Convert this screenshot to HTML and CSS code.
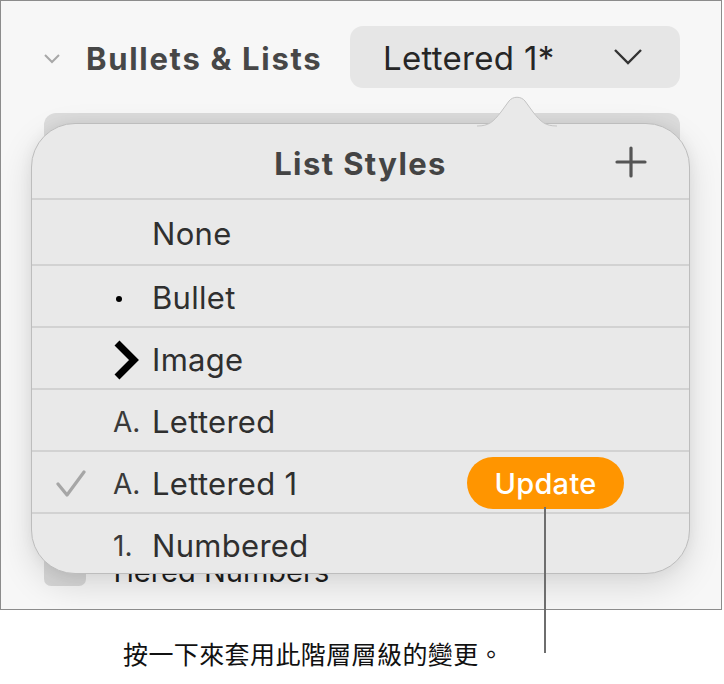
FILE: index.html
```html
<!DOCTYPE html>
<html>
<head>
<meta charset="utf-8">
<link rel="stylesheet" href="styles.css">
</head>
<body>
<div class="page">
  <div class="frame">
    <div class="header">
      <svg class="disclosure" width="16" height="10" viewBox="0 0 16 10"><polyline points="1,1 8,8 15,1" fill="none" stroke="#a8a8a8" stroke-width="2"/></svg>
      <span class="section-title">Bullets &amp; Lists</span>
      <div class="popup">
        <span class="popup-label">Lettered 1*</span>
        <svg width="30" height="18" viewBox="0 0 30 18"><polyline points="2,2 15,15 28,2" fill="none" stroke="#333" stroke-width="2.4"/></svg>
      </div>
    </div>
    <div class="underlay">
      <div class="under-bar"></div>
      <div class="under-row">
        <span class="checkbox"></span>
        <span class="under-label">Tiered Numbers</span>
      </div>
    </div>

    <div class="popover">
      <svg class="arrow" width="80" height="32" viewBox="0 0 80 32"><path d="M0,30 C12,30 16,26 24,16 L32,5 C36,0 44,0 48,5 L56,16 C64,26 68,30 80,30 L80,32 L0,32 Z" fill="#e9e9e9"/><path d="M0,30 C12,30 16,26 24,16 L32,5 C36,0 44,0 48,5 L56,16 C64,26 68,30 80,30" fill="none" stroke="#c4c4c4" stroke-width="1"/></svg>
      <div class="pop-head">
        <span></span>
        <span class="pop-title">List Styles</span>
        <svg class="plus" width="32" height="32" viewBox="0 0 32 32"><path d="M16 2V30M2 16H30" stroke="#555" stroke-width="3.2" stroke-linecap="round"/></svg>
      </div>
      <div class="row first">
        <span class="check"></span><span class="marker"></span><span class="label">None</span>
      </div>
      <div class="row">
        <span class="check"></span><span class="marker"><span class="dot"></span></span><span class="label">Bullet</span>
      </div>
      <div class="row">
        <span class="check"></span><span class="marker"><svg width="28" height="42" viewBox="0 0 28 42"><polyline points="4,4 21,21 4,38" fill="none" stroke="#000" stroke-width="7" stroke-linejoin="miter"/></svg></span><span class="label">Image</span>
      </div>
      <div class="row">
        <span class="check"></span><span class="marker">A.</span><span class="label">Lettered</span>
      </div>
      <div class="row">
        <span class="check"><svg width="30" height="28" viewBox="0 0 30 28"><polyline points="2,14 11,25 28,2" fill="none" stroke="#a6a6a6" stroke-width="3.2" stroke-linecap="round" stroke-linejoin="round"/></svg></span><span class="marker">A.</span><span class="label">Lettered 1</span>
        <span class="update">Update</span>
      </div>
      <div class="row">
        <span class="check"></span><span class="marker">1.</span><span class="label">Numbered</span>
      </div>
    </div>
  </div>
  <div class="caption">
    <span class="caption-text">按一下來套用此階層層級的變更。</span>
  </div>
  <div class="callout-line"></div>
</div>
</body>
</html>
```

FILE: styles.css
```css
* { box-sizing: border-box; }
html, body { margin: 0; padding: 0; background: #ffffff; }
body { font-family: Inter, "Noto Sans", sans-serif; }

.page { position: relative; width: 724px; height: 684px; }

.frame {
  position: relative;
  width: 722px;
  height: 610px;
  border: 1px solid #8c8c8c;
  background: #f7f7f7;
  overflow: hidden;
}

.header {
  display: flex;
  align-items: center;
  padding: 25px 41px 0 43px;
  height: 87px;
}
.disclosure { margin-top: 4px; }
.section-title {
  margin-left: 26px;
  font-size: 31px;
  font-weight: 700;
  color: #474747;
  letter-spacing: 1.7px;
  padding-top: 2px;
}
.popup {
  margin-left: auto;
  width: 330px;
  height: 62px;
  border-radius: 13px;
  background: #e6e6e6;
  display: flex;
  align-items: center;
  padding: 0 37px 0 33px;
  justify-content: space-between;
}
.popup-label { font-size: 33px; color: #262626; letter-spacing: 0.3px; padding-top: 2px; }

.underlay { padding: 25px 41px 0 43px; }
.under-bar { height: 70px; border-radius: 12px; background: #dcdcdc; }
.under-row {
  display: flex;
  align-items: center;
  margin-top: 370px;
}
.checkbox { width: 42px; height: 32px; border-radius: 7px; background: #d8d8d8; }
.under-label { margin-left: 22px; font-size: 29px; line-height: 1; color: #1e1e1e; margin-top: 4px; }

.popover {
  position: absolute;
  left: 30px;
  top: 122px;
  width: 659px;
  height: 451px;
  background: #e9e9e9;
  border: 1px solid #bdbdbd;
  border-radius: 44px;
  box-shadow: 0 12px 34px rgba(0,0,0,0.13), 0 0 14px rgba(0,0,0,0.05);
}
.arrow { position: absolute; left: 445px; top: -28px; }

.pop-head {
  height: 74px;
  display: grid;
  grid-template-columns: 1fr auto 1fr;
  align-items: center;
  padding: 0 42px;
}
.pop-title { font-size: 31px; font-weight: 700; color: #444; padding-top: 4px; letter-spacing: 1.4px; }
.plus { justify-self: end; margin-top: 2px; }

.row {
  height: 62px;
  border-top: 2px solid #d2d2d2;
  display: flex;
  align-items: center;
  padding: 4px 0 0 24px;
}
.row.first { height: 66px; }
.check { width: 57px; display: flex; align-items: center; }
.marker {
  width: 40px;
  font-size: 28px;
  color: #3a3a3a;
  display: flex;
  align-items: center;
}
.dot { width: 6px; height: 6px; border-radius: 50%; background: #000; margin-left: 3px; margin-top: 2px; }
.label { font-size: 31px; line-height: 1.1; color: #2f2f2f; letter-spacing: 0.3px; margin-left: -1px; }
.update {
  margin-left: auto;
  margin-right: 65px;
  width: 157px;
  height: 52px;
  border-radius: 26px;
  background: #ff9500;
  color: #fff;
  font-size: 29px;
  font-weight: 500;
  letter-spacing: 0.3px;
  display: flex;
  align-items: center;
  justify-content: center;
  margin-top: -2px;
}

.caption { padding: 25px 0 0 123px; }
.caption-text {
  font-family: "Noto Sans CJK TC", sans-serif;
  font-size: 25px;
  color: #111;
  letter-spacing: 0.4px;
}

.callout-line {
  position: absolute;
  left: 544px;
  top: 507px;
  width: 2px;
  height: 146px;
  background: #6e6e6e;
}
```
